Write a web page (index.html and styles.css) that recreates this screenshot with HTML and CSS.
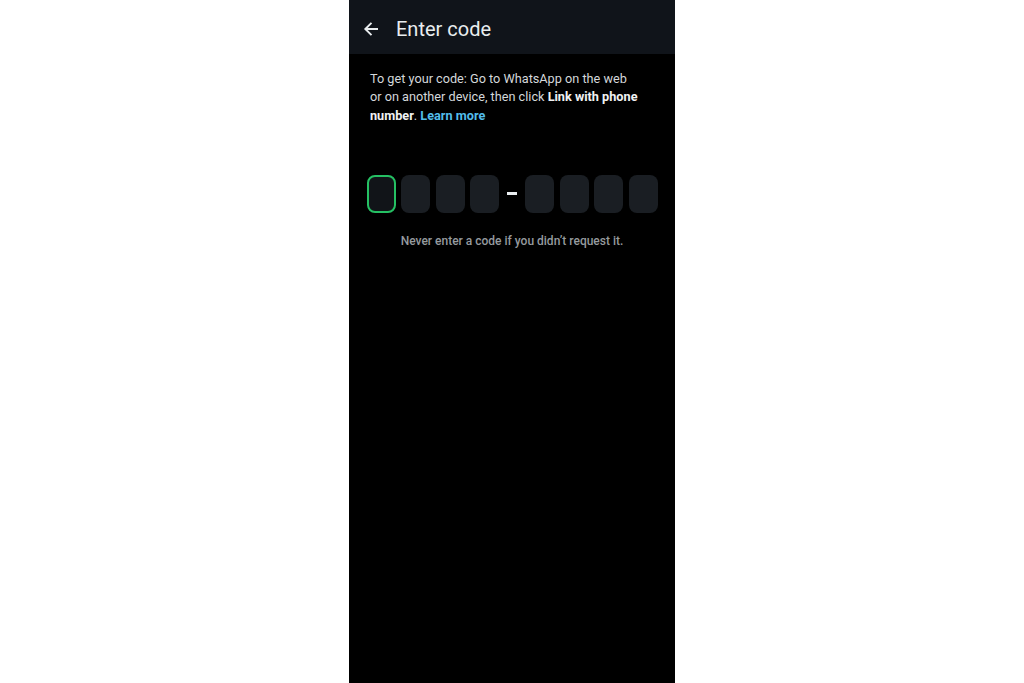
FILE: index.html
```html
<!DOCTYPE html>
<html>
<head>
<meta charset="utf-8">
<link rel="stylesheet" href="styles.css">
</head>
<body>
<div class="phone">
  <header class="appbar">
    <svg class="back" width="16" height="16" viewBox="0 0 16 16"><path d="M15 8H2.5M8.5 1.8L2.3 8l6.2 6.2" fill="none" stroke="#e9edef" stroke-width="1.9"/></svg>
    <h1 class="title">Enter code</h1>
  </header>
  <main class="content">
    <p class="intro">To get your code: Go to WhatsApp on the web or on another device, then click <b>Link with phone number</b>. <a class="link">Learn more</a></p>
    <div class="code">
      <div class="cell active"></div>
      <div class="cell"></div>
      <div class="cell"></div>
      <div class="cell"></div>
      <div class="dash"></div>
      <div class="cell"></div>
      <div class="cell"></div>
      <div class="cell"></div>
      <div class="cell"></div>
    </div>
    <p class="note">Never enter a code if you didn’t request it.</p>
  </main>
</div>
</body>
</html>
```
FILE: styles.css
```css
html, body {
  margin: 0;
  padding: 0;
  background: #ffffff;
}
body {
  display: flex;
  justify-content: center;
  font-family: Roboto, "Noto Sans", sans-serif;
}
.phone {
  width: 326px;
  height: 683px;
  background: #000000;
  display: flex;
  flex-direction: column;
}
.appbar {
  height: 54px;
  background: #10141a;
  display: flex;
  align-items: center;
  padding-left: 14px;
  box-sizing: border-box;
  padding-top: 4px;
}
.back {
  display: block;
  margin-right: 17px;
}
.title {
  margin: 0;
  font-size: 20px;
  font-weight: 400;
  color: #e9edef;
  letter-spacing: 0;
}
.content {
  padding-top: 15.5px;
  display: flex;
  flex-direction: column;
}
.intro {
  margin: 0 35px 0 21px;
  font-size: 12.7px;
  line-height: 18.8px;
  color: #d4d8db;
}
.intro b {
  font-weight: 700;
  color: #f0f2f3;
}
.link {
  color: #53bdeb;
  font-weight: 700;
}
.code {
  margin-top: 49.5px;
  display: flex;
  justify-content: center;
  align-items: center;
  gap: 5.5px;
}
.cell {
  width: 29px;
  height: 38px;
  border-radius: 8px;
  background: #1a1e23;
  box-sizing: border-box;
}
.cell.active {
  background: #111418;
  border: 2px solid #25c063;
}
.dash {
  width: 10px;
  height: 3px;
  background: #e9edef;
  margin: 0 2.5px 2px 2.5px;
}
.note {
  margin: 21px 0 0 0;
  text-align: center;
  font-size: 12px;
  font-weight: 500;
  color: #959a9e;
}
```
